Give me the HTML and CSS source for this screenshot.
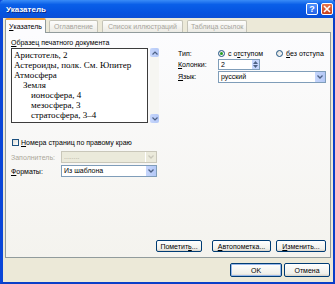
FILE: index.html
```html
<!DOCTYPE html>
<html lang="ru">
  <head>
    <meta charset="UTF-8" />
    <title>Указатель</title>
    <link rel="stylesheet" href="styles.css">
  </head>
  <body>
    <div class="window">
      <div class="titlebar">
        <span class="title">Указатель</span>
        <div class="title-btns">
          <span class="tbtn help">?</span>
          <span class="tbtn close">
            <svg width="8" height="8" viewBox="0 0 8 8"><path d="M1 1 L7 7 M7 1 L1 7" stroke="#fff" stroke-width="1.6"/></svg>
          </span>
        </div>
      </div>

      <div class="frame">
        <div class="tabs">
          <div class="tab active"><u>У</u>казатель</div>
          <div class="tab">Оглавление</div>
          <div class="tab">Список иллюстраций</div>
          <div class="tab">Таблица ссылок</div>
        </div>

        <div class="panel">
          <div class="top">
            <div class="preview-col">
              <div class="label"><u>О</u>бразец печатного документа</div>
              <div class="preview-wrap">
                <div class="preview">
                  <div>Аристотель, 2</div>
                  <div>Астероиды, полк. См. Юпитер</div>
                  <div>Атмосфера</div>
                  <div class="lvl1">Земля</div>
                  <div class="lvl2">ионосфера, 4</div>
                  <div class="lvl2">мезосфера, 3</div>
                  <div class="lvl2">стратосфера, 3–4</div>
                  <div class="lvl2">тропосфера, 2</div>
                </div>
                <div class="scroll">
                  <span class="arrow">
                    <svg width="6" height="4" viewBox="0 0 6 4"><path d="M0.5 3.5 L3 1 L5.5 3.5" fill="none" stroke="#4d6185" stroke-width="1.2"/></svg>
                  </span>
                  <span class="arrow">
                    <svg width="6" height="4" viewBox="0 0 6 4"><path d="M0.5 0.5 L3 3 L5.5 0.5" fill="none" stroke="#4d6185" stroke-width="1.2"/></svg>
                  </span>
                </div>
              </div>
            </div>

            <div class="options">
              <div class="opt-row">
                <span class="opt-label">Тип:</span>
                <span class="radio checked"><span class="dot"></span></span>
                <span class="radio-text">с о<u>т</u>ступом</span>
                <span class="radio"></span>
                <span class="radio-text"><u>б</u>ез отступа</span>
              </div>
              <div class="opt-row">
                <span class="opt-label"><u>К</u>олонки:</span>
                <div class="spinner">
                  <span class="spin-val">2</span>
                  <span class="spin-btns">
                    <span class="spin-btn"><svg width="5" height="3" viewBox="0 0 5 3"><path d="M0 3 L2.5 0 L5 3Z" fill="#4d6185"/></svg></span>
                    <span class="spin-btn"><svg width="5" height="3" viewBox="0 0 5 3"><path d="M0 0 L2.5 3 L5 0Z" fill="#4d6185"/></svg></span>
                  </span>
                </div>
              </div>
              <div class="opt-row">
                <span class="opt-label"><u>Я</u>зык:</span>
                <div class="select wide">
                  <span class="sel-val">русский</span>
                  <span class="drop"><svg width="6" height="4" viewBox="0 0 6 4"><path d="M0.5 0.5 L3 3 L5.5 0.5" fill="none" stroke="#4d6185" stroke-width="1.3"/></svg></span>
                </div>
              </div>
            </div>
          </div>

          <div class="check-row">
            <span class="checkbox"></span>
            <span><u>Н</u>омера страниц по правому краю</span>
          </div>
          <div class="form-row disabled">
            <span class="form-label">Заполнитель:</span>
            <div class="select">
              <span class="sel-val">........</span>
              <span class="drop"><svg width="6" height="4" viewBox="0 0 6 4"><path d="M0.5 0.5 L3 3 L5.5 0.5" fill="none" stroke="#c9c7ba" stroke-width="1.3"/></svg></span>
            </div>
          </div>
          <div class="form-row">
            <span class="form-label"><u>Ф</u>орматы:</span>
            <div class="select">
              <span class="sel-val">Из шаблона</span>
              <span class="drop"><svg width="6" height="4" viewBox="0 0 6 4"><path d="M0.5 0.5 L3 3 L5.5 0.5" fill="none" stroke="#4d6185" stroke-width="1.3"/></svg></span>
            </div>
          </div>

          <div class="panel-btns">
            <button class="btn b-mark">Пометит<u>ь</u>...</button>
            <button class="btn b-auto"><u>А</u>втопометка...</button>
            <button class="btn b-edit"><u>И</u>зменить...</button>
          </div>
        </div>

        <div class="dlg-btns">
          <button class="btn b-ok default">OK</button>
          <button class="btn b-cancel">Отмена</button>
        </div>
      </div>
    </div>
  </body>
</html>
```

FILE: styles.css
```css
html,
body {
  height: 100%;
}
body {
  margin: 0;
  font-family: "Liberation Sans", Arial, sans-serif;
  font-size: 7px;
  color: #000;
  background: #ece9d8;
}
u {
  text-decoration: underline;
}
.window {
  width: 100%;
  height: 100%;
  box-sizing: border-box;
  display: flex;
  flex-direction: column;
  background: #ece9d8;
  border-left: 3px solid #0a46d8;
  border-right: 2px solid #0a3fc8;
  border-bottom: 2px solid #0a3fc8;
}
/* Title bar */
.titlebar {
  flex: none;
  height: 18px;
  margin-left: -3px;
  margin-right: -2px;
  padding: 0 2px 0 6px;
  display: flex;
  align-items: center;
  justify-content: space-between;
  border-radius: 4px 4px 0 0;
  background: linear-gradient(#3a8cf7 0%, #0a5fe8 25%, #0553e0 70%, #0a4fd6 100%);
}
.title {
  color: #fff;
  font-weight: bold;
  font-size: 8px;
  text-shadow: 1px 1px 0 #0a2a8a;
}
.title-btns {
  display: flex;
  gap: 3px;
}
.tbtn {
  width: 12px;
  height: 12px;
  box-sizing: border-box;
  border: 1px solid #fff;
  border-radius: 2px;
  display: flex;
  align-items: center;
  justify-content: center;
  color: #fff;
  font-weight: bold;
  font-size: 9px;
}
.help {
  background: linear-gradient(#4e93ff, #2262e6);
}
.close {
  background: linear-gradient(#e8764c, #c8401c);
}
/* Dialog body */
.frame {
  flex: 1;
  min-height: 0;
  display: flex;
  flex-direction: column;
  padding: 0 2px 5px 2px;
}
.tabs {
  flex: none;
  display: flex;
  height: 14px;
  align-items: flex-end;
}
.tab {
  height: 12px;
  box-sizing: border-box;
  padding: 0 3px;
  border: 1px solid #c4c3b8;
  border-bottom: none;
  border-radius: 2px 2px 0 0;
  background: linear-gradient(#fdfdfc, #ecebe5);
  color: #a6a49c;
  display: flex;
  align-items: center;
  margin-right: 4px;
  white-space: nowrap;
}
.tab:nth-child(2) {
  padding: 0 4px;
}
.tab:nth-child(3) {
  padding: 0 5px;
}
.tab.active {
  height: 15px;
  margin-right: 3px;
  color: #000;
  background: #fcfcfe;
  border-color: #919b9c;
  border-top: 2px solid #f2a33b;
  position: relative;
  z-index: 1;
  margin-bottom: -1px;
}
.panel {
  flex: 1;
  box-sizing: border-box;
  border: 1px solid #919b9c;
  background: linear-gradient(#fcfcfe, #f4f3ee);
  display: flex;
  flex-direction: column;
  padding: 5px 4px 5px 5px;
}
.top {
  display: flex;
}
.preview-col {
  flex: none;
  width: 162px;
}
.label {
  line-height: 9px;
  white-space: nowrap;
}
.preview-wrap {
  display: flex;
  margin-top: 1px;
  height: 75px;
}
.preview {
  width: 137px;
  box-sizing: border-box;
  border: 1px solid #3c3c3c;
  background: #fff;
  font-family: "Liberation Serif", "Times New Roman", serif;
  font-size: 9px;
  line-height: 10px;
  padding: 1px 0 0 2px;
  overflow: hidden;
  white-space: nowrap;
}
.lvl1 {
  padding-left: 9px;
}
.lvl2 {
  padding-left: 17px;
}
.scroll {
  width: 9px;
  margin-left: 2px;
  display: flex;
  flex-direction: column;
  justify-content: space-between;
  background: #f6f6f2;
}
.arrow {
  height: 9px;
  border-radius: 2px;
  background: linear-gradient(90deg, #c6d6fc, #b4c8f6);
  display: flex;
  align-items: center;
  justify-content: center;
}
.options {
  flex: none;
  padding-left: 5px;
  padding-top: 10px;
  display: flex;
  flex-direction: column;
  gap: 1px;
  white-space: nowrap;
}
.opt-row {
  display: flex;
  align-items: center;
  height: 10px;
}
.opt-row:nth-child(2),
.opt-row:nth-child(3) {
  height: 11px;
}
.opt-label {
  width: 40px;
  flex: none;
}
.radio {
  flex: none;
  width: 7px;
  height: 7px;
  box-sizing: border-box;
  border: 1px solid #1c5180;
  border-radius: 50%;
  background: linear-gradient(135deg, #dcdcd6, #fff);
  display: flex;
  align-items: center;
  justify-content: center;
}
.dot {
  width: 3px;
  height: 3px;
  border-radius: 50%;
  background: #21a121;
}
.radio-text {
  margin-left: 3px;
  margin-right: 13px;
}
.spinner {
  width: 42px;
  height: 11px;
  box-sizing: border-box;
  border: 1px solid #7f9db9;
  background: #fff;
  display: flex;
  justify-content: space-between;
}
.spin-val {
  padding-left: 2px;
  line-height: 9px;
}
.spin-btns {
  width: 8px;
  display: flex;
  flex-direction: column;
}
.spin-btn {
  flex: 1;
  background: #c6d6fc;
  border-left: 1px solid #fff;
  display: flex;
  align-items: center;
  justify-content: center;
}
.select {
  width: 96px;
  height: 12px;
  box-sizing: border-box;
  border: 1px solid #7f9db9;
  background: #fff;
  display: flex;
  justify-content: space-between;
}
.select.wide {
  width: 108px;
}
.sel-val {
  padding-left: 2px;
  line-height: 10px;
}
.drop {
  width: 10px;
  background: linear-gradient(90deg, #c6d6fc, #b4c8f6);
  border-left: 1px solid #fff;
  display: flex;
  align-items: center;
  justify-content: center;
}
.check-row {
  display: flex;
  align-items: center;
  gap: 2px;
  margin-top: 16px;
  margin-left: 1px;
}
.checkbox {
  width: 7px;
  height: 7px;
  box-sizing: border-box;
  border: 1px solid #1c5180;
  background: linear-gradient(135deg, #dcdcd6, #fff);
}
.form-row {
  display: flex;
  align-items: center;
  margin-top: 2px;
}
.form-row.disabled {
  margin-top: 5px;
  color: #aca899;
}
.form-row.disabled .select {
  background: #ebeadb;
  border-color: #c9c7ba;
}
.form-row.disabled .drop {
  background: #ebeadb;
}
.form-label {
  width: 50px;
}
.panel-btns {
  margin-top: auto;
  display: flex;
  justify-content: flex-end;
}
.btn {
  height: 12px;
  box-sizing: border-box;
  border: 1px solid #003c74;
  border-radius: 2px;
  background: linear-gradient(#fff, #f0f0ea 80%, #d6d0c5);
  font-family: "Liberation Sans", Arial, sans-serif;
  font-size: 7px;
  padding: 0;
  color: #000;
}
.b-mark {
  width: 46px;
  margin-right: 10px;
}
.b-auto {
  width: 59px;
  margin-right: 5px;
}
.b-edit {
  width: 50px;
}
.dlg-btns {
  flex: none;
  display: flex;
  justify-content: flex-end;
  gap: 2px;
  margin-top: 5px;
  padding-right: 1px;
}
.dlg-btns .btn {
  height: 14px;
  width: 52px;
}
.dlg-btns .b-cancel {
  width: 46px;
}
.btn.default {
  box-shadow: inset 0 0 0 1px #98b8ea;
}
```
